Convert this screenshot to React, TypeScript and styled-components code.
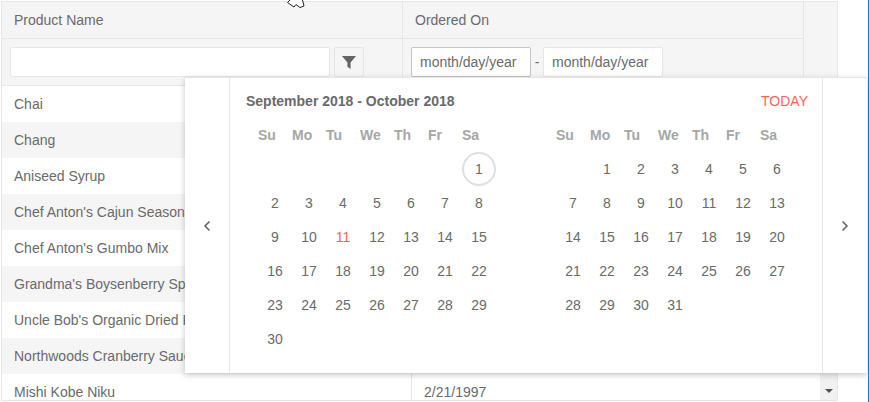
import React from "react";
import styled, { createGlobalStyle } from "styled-components";

const Global = createGlobalStyle`
  html, body { margin: 0; padding: 0; background: #fff; overflow: hidden; }
  body { font: 14px "Liberation Sans", Arial, sans-serif; color: #6a6a6a; }
  * { box-sizing: border-box; }
`;

const Page = styled.div`
  position: relative;
  width: 869px;
  height: 402px;
  padding: 1px 0 0 1px;
  border-right: 1px solid #1a76c4;
  overflow: hidden;
`;

const Grid = styled.div`
  width: 837px;
  height: 400px;
  border: 1px solid #e6e6e6;
  display: flex;
  flex-direction: column;
  overflow: hidden;
`;

const Head = styled.div`
  display: grid;
  grid-template-columns: 401px 401px 1fr;
  grid-template-rows: 37px 47px;
  background: #f5f5f5;
  flex: none;
`;

const HeadCell = styled.div`
  display: flex;
  align-items: center;
  padding-left: 12px;
  border-right: 1px solid #e6e6e6;
  border-bottom: 1px solid #e6e6e6;
`;

const Filler = styled.div`
  grid-column: 3;
  grid-row: 1 / 3;
  border-bottom: 1px solid #e6e6e6;
`;

const FilterCell = styled.div<{ $pad: number }>`
  display: flex;
  align-items: flex-start;
  padding: 8px 0 0 ${(p) => p.$pad}px;
  border-right: 1px solid #e6e6e6;
  border-bottom: 1px solid #e6e6e6;
`;

const TextInput = styled.input<{ $width: number; $focused?: boolean }>`
  width: ${(p) => p.$width}px;
  height: 30px;
  padding: 0 8px;
  border: 1px solid ${(p) => (p.$focused ? "#c4c4c4" : "#e6e6e6")};
  border-radius: 2px;
  background: #fff;
  color: #6a6a6a;
  font: 14px "Liberation Sans", Arial, sans-serif;
  outline: none;
`;

const FilterButton = styled.button`
  width: 30px;
  height: 30px;
  margin-left: 4px;
  padding: 0;
  display: flex;
  align-items: center;
  justify-content: center;
  border: 1px solid #e6e6e6;
  border-radius: 2px;
  background: #f5f5f5;
`;

const Dash = styled.span`
  width: 12px;
  height: 30px;
  line-height: 30px;
  text-align: center;
`;

const Body = styled.div`
  flex: 1;
  min-height: 0;
  display: flex;
`;

const Rows = styled.div`
  flex: 1;
  min-width: 0;
`;

const Row = styled.div<{ $alt: boolean }>`
  display: grid;
  grid-template-columns: 410px 1fr;
  height: 36px;
  line-height: 36px;
  background: ${(p) => (p.$alt ? "#f5f5f5" : "#fff")};
`;

const Cell = styled.div`
  padding-left: 12px;
  white-space: nowrap;
  overflow: hidden;
  & + & { border-left: 1px solid #e6e6e6; padding-left: 12px; margin-left: -1px; }
`;

const Scrollbar = styled.div`
  width: 17px;
  flex: none;
  background: #f1f1f1;
  display: flex;
  flex-direction: column;
  justify-content: flex-end;
  align-items: center;
  padding-bottom: 7px;
`;

const Popup = styled.div`
  position: absolute;
  left: 185px;
  top: 77px;
  width: 682px;
  height: 296px;
  display: flex;
  background: #fff;
  border-top: 1px solid #e6e6e6;
  box-shadow: 0 2px 6px rgba(0, 0, 0, 0.22);
`;

const Nav = styled.div<{ $side: "left" | "right" }>`
  width: 45px;
  flex: none;
  display: flex;
  align-items: center;
  justify-content: center;
  ${(p) => (p.$side === "left" ? "border-right" : "border-left")}: 1px solid #e6e6e6;
`;

const Main = styled.div`
  flex: 1;
  padding: 13px 14px 0 16px;
`;

const TitleBar = styled.div`
  display: flex;
  justify-content: space-between;
  align-items: center;
  height: 20px;
`;

const Title = styled.div`
  font-weight: 700;
`;

const Today = styled.div`
  color: #ff6358;
`;

const Months = styled.div`
  display: flex;
  gap: 60px;
  padding: 7px 0 0 12px;
`;

const Month = styled.div`
  display: grid;
  grid-template-columns: repeat(7, 34px);
  grid-auto-rows: 34px;
`;

const Weekday = styled.div`
  font-weight: 700;
  color: #a6a6a6;
  line-height: 34px;
`;

const Day = styled.div<{ $today?: boolean; $selected?: boolean }>`
  display: flex;
  align-items: center;
  justify-content: center;
  color: ${(p) => (p.$today ? "#ff6358" : "#6a6a6a")};
  border-radius: 50%;
  border: ${(p) => (p.$selected ? "2px solid #e0e0e0" : "0")};
`;

const CursorMark = styled.svg`
  position: absolute;
  left: 285px;
  top: 0;
`;

const WEEK = ["Su", "Mo", "Tu", "We", "Th", "Fr", "Sa"];

const Calendar = ({ blanks, days, selected, today }: { blanks: number; days: number; selected?: number; today?: number }) => (
  <Month>
    {WEEK.map((w) => (
      <Weekday key={w}>{w}</Weekday>
    ))}
    {Array.from({ length: blanks }, (_, i) => (
      <span key={i} />
    ))}
    {Array.from({ length: days }, (_, i) => (
      <Day key={i} $selected={i + 1 === selected} $today={i + 1 === today}>
        {i + 1}
      </Day>
    ))}
  </Month>
);

const ROWS: [string, string][] = [
  ["Chai", ""],
  ["Chang", ""],
  ["Aniseed Syrup", ""],
  ["Chef Anton's Cajun Seasoning", ""],
  ["Chef Anton's Gumbo Mix", ""],
  ["Grandma's Boysenberry Spread", ""],
  ["Uncle Bob's Organic Dried Pears", ""],
  ["Northwoods Cranberry Sauce", ""],
  ["Mishi Kobe Niku", "2/21/1997"],
];

export default function App() {
  return (
    <>
      <Global />
      <Page>
        <Grid>
          <Head>
            <HeadCell>Product Name</HeadCell>
            <HeadCell>Ordered On</HeadCell>
            <Filler />
            <FilterCell $pad={8}>
              <TextInput $width={320} readOnly />
              <FilterButton aria-label="Filter">
                <svg width="14" height="13" viewBox="0 0 14 13">
                  <path d="M0 0h14L8.6 6.5V13L5.4 10.8V6.5z" fill="#656565" />
                </svg>
              </FilterButton>
            </FilterCell>
            <FilterCell $pad={8}>
              <TextInput $width={120} $focused readOnly value="month/day/year" />
              <Dash>-</Dash>
              <TextInput $width={120} readOnly value="month/day/year" />
            </FilterCell>
          </Head>
          <Body>
            <Rows>
              {ROWS.map(([name, date], i) => (
                <Row key={name} $alt={i % 2 === 1}>
                  <Cell>{name}</Cell>
                  <Cell>{date}</Cell>
                </Row>
              ))}
            </Rows>
            <Scrollbar>
              <svg width="8" height="4" viewBox="0 0 8 4">
                <path d="M0 0h8L4 4z" fill="#505050" />
              </svg>
            </Scrollbar>
          </Body>
        </Grid>
        <Popup>
          <Nav $side="left">
            <svg width="8" height="12" viewBox="0 0 8 12">
              <path d="M6.5 1.5L2 6l4.5 4.5" fill="none" stroke="#656565" strokeWidth="1.6" />
            </svg>
          </Nav>
          <Main>
            <TitleBar>
              <Title>September 2018 - October 2018</Title>
              <Today>TODAY</Today>
            </TitleBar>
            <Months>
              <Calendar blanks={6} days={30} selected={1} today={11} />
              <Calendar blanks={1} days={31} />
            </Months>
          </Main>
          <Nav $side="right">
            <svg width="8" height="12" viewBox="0 0 8 12">
              <path d="M1.5 1.5L6 6l-4.5 4.5" fill="none" stroke="#656565" strokeWidth="1.6" />
            </svg>
          </Nav>
        </Popup>
        <CursorMark width="24" height="10" viewBox="0 0 24 10">
          <path d="M2.5 2.5L5 0H18L19 6L15 7.5L11.5 4.5L9.5 7z" fill="#fff" stroke="none" />
          <path d="M2.5 2.5L5 0M2.5 2.5L9 7L11 4.5L15 7.5L19 6L17.5 0" fill="none" stroke="#222" strokeWidth="1" />
        </CursorMark>
      </Page>
    </>
  );
}
